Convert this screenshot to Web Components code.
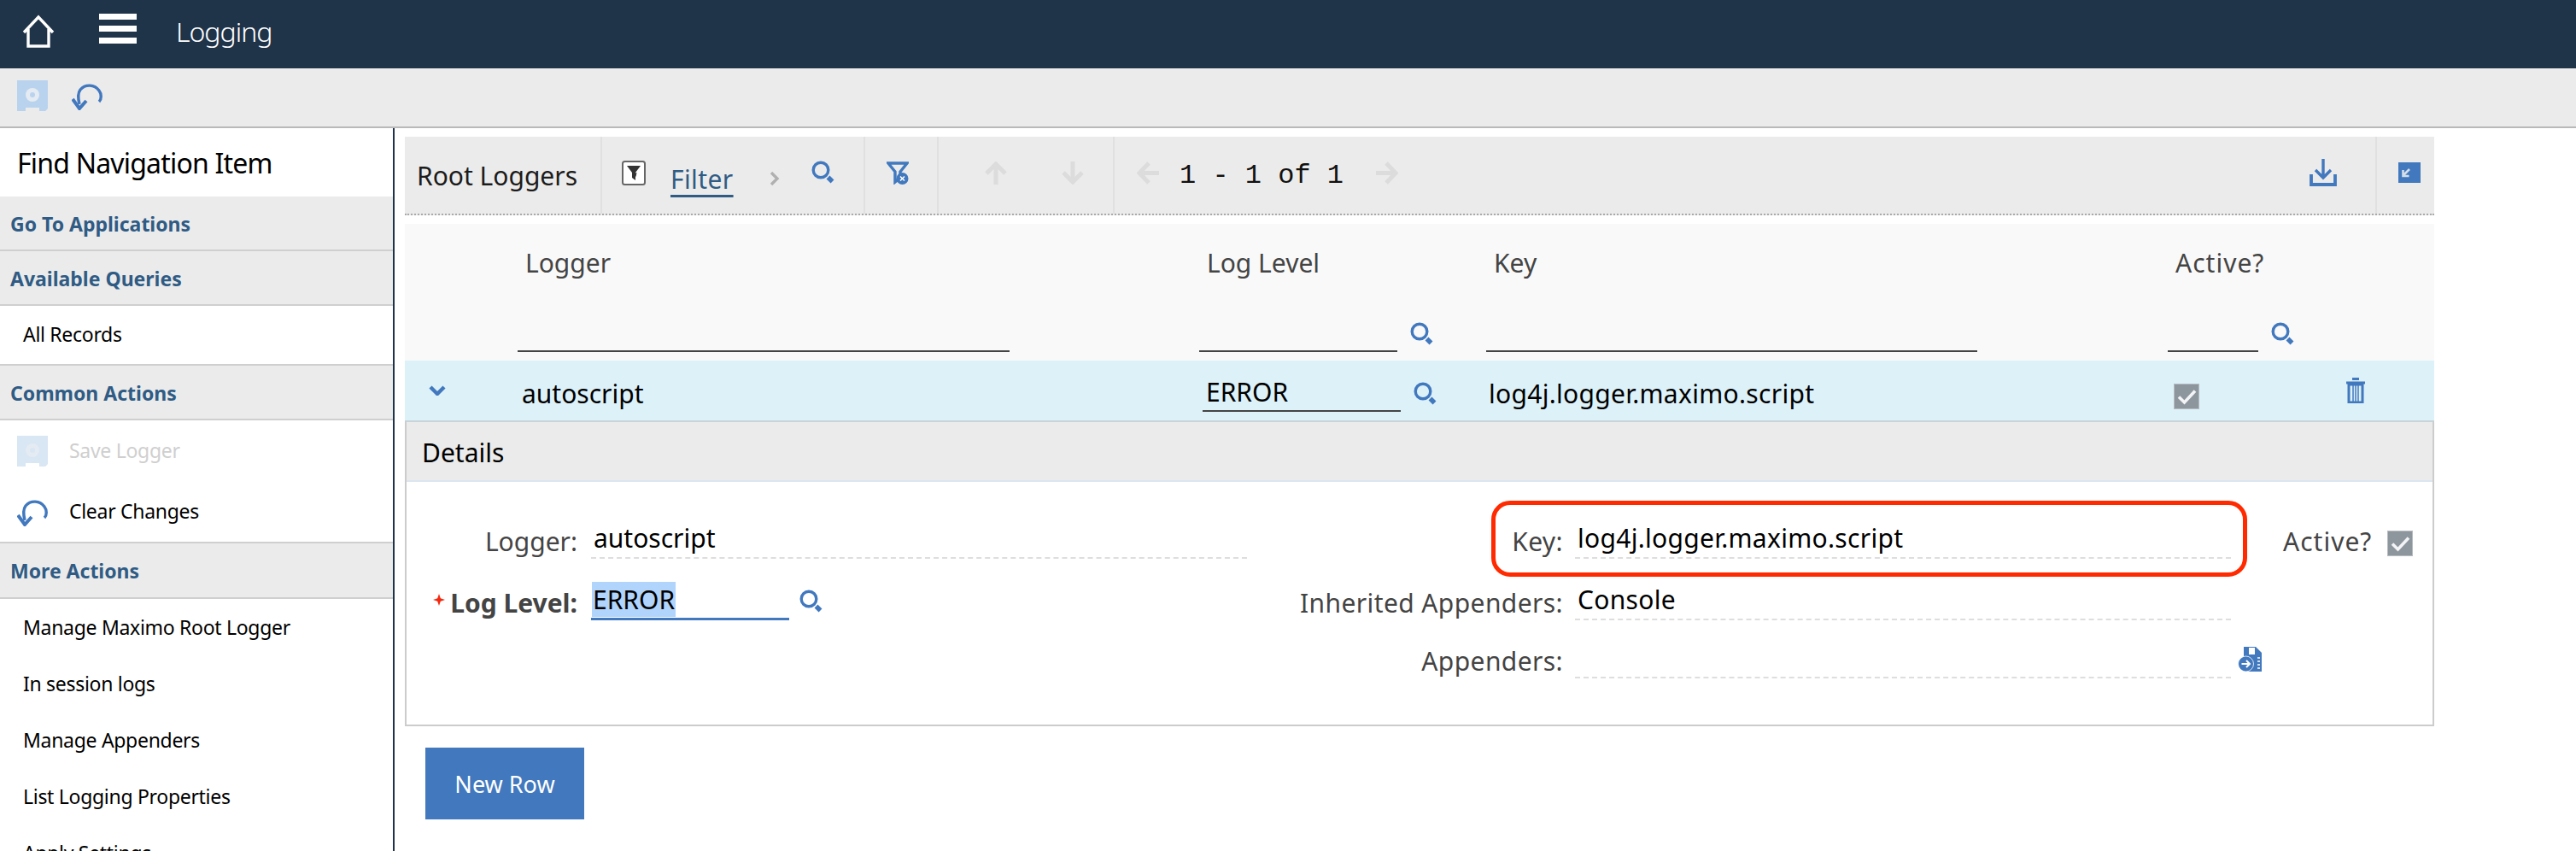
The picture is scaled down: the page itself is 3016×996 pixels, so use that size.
<!DOCTYPE html>
<html lang="en">
<head>
<meta charset="utf-8">
<title>Logging</title>
<style>
  html, body { margin: 0; padding: 0; background: #fff; }
  body { width: 3016px; height: 996px; overflow: hidden; font-family: "Noto Sans", "Open Sans", sans-serif; }
</style>
</head>
<body>
<mx-app>
  <mx-topbar slot="top" title-text="Logging"></mx-topbar>
  <mx-actionbar slot="actions"></mx-actionbar>
  <mx-sidebar slot="side">
    <mx-side-search>Find Navigation Item</mx-side-search>
    <mx-side-head>Go To Applications</mx-side-head>
    <mx-side-head>Available Queries</mx-side-head>
    <mx-side-group h="68">
      <mx-side-item>All Records</mx-side-item>
    </mx-side-group>
    <mx-side-head>Common Actions</mx-side-head>
    <mx-side-group h="142" class="actions">
      <mx-side-item icon="save" disabled>Save Logger</mx-side-item>
      <mx-side-item icon="undo">Clear Changes</mx-side-item>
    </mx-side-group>
    <mx-side-head h="63">More Actions</mx-side-head>
    <mx-side-group h="340" flat>
      <mx-side-item>Manage Maximo Root Logger</mx-side-item>
      <mx-side-item>In session logs</mx-side-item>
      <mx-side-item>Manage Appenders</mx-side-item>
      <mx-side-item>List Logging Properties</mx-side-item>
      <mx-side-item>Apply Settings</mx-side-item>
    </mx-side-group>
  </mx-sidebar>
  <mx-main slot="main">
    <mx-table-bar title-text="Root Loggers"></mx-table-bar>
    <mx-table-head></mx-table-head>
    <mx-table-row></mx-table-row>
    <mx-details></mx-details>
    <mx-button>New Row</mx-button>
  </mx-main>
</mx-app>

<script>
const BLUE = '#4178be';

const ICONS = {
  home: [38, 40, `<path d="M2 21 19 3l17 18M7 17v20h24V17" fill="none" stroke="#fff" stroke-width="3.4"/>`],
  menu: [44, 36, `<path d="M0 0h44v7H0zM0 14h44v7H0zM0 28h44v7H0z" fill="#fff"/>`],
  save: [36, 36, `<path d="M0 0h36v33l-3 3h-7v-4H10v4H0z" fill="currentColor"/><circle cx="18" cy="17" r="8" fill="#e4ebf2"/><circle cx="18" cy="17" r="3" fill="currentColor"/>`],
  undo: [36, 34, `<path d="M32 24c3-3 3-9 0-13a14 14 0 0 0-22-1c-3 4-3 9-1 17" fill="none" stroke="${BLUE}" stroke-width="3.4"/><path d="M1 21l8 11 8-9" fill="none" stroke="${BLUE}" stroke-width="4"/>`],
  filter: [28, 29, `<rect x="1" y="1" width="26" height="27" rx="2.5" fill="#fff" stroke="#666" stroke-width="2"/><path d="M6 6h16l-6 8v9l-4-3v-6z" fill="#333"/><path d="M14.500 15l3-1-1 5z" fill="#333"/>`],
  search: [28, 28, `<circle cx="11" cy="11" r="8.8" fill="none" stroke="${BLUE}" stroke-width="3.4"/><path d="M19.500 19.500l5 5" stroke="${BLUE}" stroke-width="5.500"/>`],
  clearfilter: [26, 27, `<path d="M2 2h22l-8 10v7l-6 5V12z" fill="none" stroke="${BLUE}" stroke-width="3.400"/><circle cx="18.500" cy="20" r="7" fill="${BLUE}"/><path d="M16 17.500l5 5m0-5l-5 5" stroke="#fff" stroke-width="1.600"/>`],
  chevright: [12, 16, `<path d="M2 1l7 7-7 7" fill="none" stroke="#b0b0b0" stroke-width="3.400"/>`],
  up: [26, 27, `<path d="M13 27V4M2 14 13 3l11 11" fill="none" stroke="#dcdcdc" stroke-width="5"/>`],
  down: [26, 27, `<path d="M13 0v23M2 13l11 11 11-11" fill="none" stroke="#dcdcdc" stroke-width="5"/>`],
  left: [26, 27, `<path d="M26 13.500H4M14 2 3 13.500 14 25" fill="none" stroke="#dcdcdc" stroke-width="5"/>`],
  right: [26, 27, `<path d="M0 13.500h22M12 2l11 11.500L12 25" fill="none" stroke="#dcdcdc" stroke-width="5"/>`],
  download: [32, 32, `<path d="M16 0v21M7 13l9 9 9-9" fill="none" stroke="${BLUE}" stroke-width="3.400"/><path d="M2 18v12h28V18" fill="none" stroke="${BLUE}" stroke-width="3.800"/>`],
  minimize: [26, 24, `<rect width="26" height="24" fill="${BLUE}"/><path d="M13 8l-7 7m-.500-6v7h7" fill="none" stroke="#d4deea" stroke-width="2.600"/>`],
  chevdown: [20, 12, `<path d="M2 2l8 8 8-8" fill="none" stroke="${BLUE}" stroke-width="4.400"/>`],
  trash: [22, 30, `<path d="M7 1.500h8M0 6h22" stroke="${BLUE}" stroke-width="3"/><path d="M3 8h16v21H3z" fill="none" stroke="${BLUE}" stroke-width="3"/><path d="M8 8v20M11 8v20M14 8v20" stroke="${BLUE}" stroke-width="1.500"/>`],
  check: [30, 30, `<rect width="30" height="30" fill="#8d959d"/><rect x=".5" y=".5" width="29" height="29" fill="none" stroke="#b5bbc0"/><path d="M6 15.500l6.500 6.500L25 8.500" fill="none" stroke="#f2f4f5" stroke-width="3.600"/>`],
  star: [14, 14, `<path d="M7 0l1.800 5.200L14 7 8.800 8.800 7 14 5.200 8.800 0 7l5.200-1.800z" fill="#f5280f"/>`],
  appender: [28, 30, `<path d="M7 0h14l7 7v22H7z" fill="${BLUE}"/><path d="M13 1h7v8h-7z" fill="#fff"/><path d="M23 13h3M23 17h3M23 21h3M23 25h3" stroke="#fff" stroke-width="1.500"/><circle cx="9.500" cy="20" r="9" fill="${BLUE}" stroke="#fff" stroke-width=".800"/><path d="M4.500 20h9M10 16l4 4-4 4" fill="none" stroke="#fff" stroke-width="2"/>`],
};

// small base class, everything below just hands over its css + markup
class MxElement extends HTMLElement {
  constructor() {
    super();
    this.attachShadow({ mode: 'open' });
  }
  connectedCallback() {
    this.shadowRoot.innerHTML = `<style>${this.css()}</style>${this.html()}`;
  }
  css() { return ':host { display: block; }'; }
  html() { return '<slot></slot>'; }
}

class MxIcon extends MxElement {
  css() {
    return `:host { display: inline-flex; flex: none; color: var(--icon-colour, #b9d3ee); }
      svg { display: block; }`;
  }
  html() {
    const name = this.getAttribute('name');
    const [w, h, body] = ICONS[name];
    return `<svg width="${w}" height="${h}" viewBox="0 0 ${w} ${h}" aria-hidden="true">${body}</svg>`;
  }
}

class MxApp extends MxElement {
  css() {
    return `:host { display: grid; grid-template-rows: 80px 70px 846px; width: 3016px; height: 996px; overflow: hidden; }
      .body { display: flex; min-height: 0; overflow: hidden; }`;
  }
  html() {
    return `<slot name="top"></slot><slot name="actions"></slot>
      <div class="body"><slot name="side"></slot><slot name="main"></slot></div>`;
  }
}

class MxTopbar extends MxElement {
  css() {
    return `:host { display: flex; align-items: center; background: #1f3349; color: #fff; padding-left: 26px; font-size: 32px; font-weight: 300; letter-spacing: -1px; }
      mx-icon[name=home] { margin-top: -6px; }
      mx-icon[name=menu] { margin: -12px 0 0 52px; }
      span { margin: -8px 0 0 46px; }`;
  }
  html() {
    return `<mx-icon name="home"></mx-icon><mx-icon name="menu"></mx-icon><span>${this.getAttribute('title-text')}</span>`;
  }
}

class MxActionbar extends MxElement {
  css() {
    return `:host { display: flex; align-items: center; gap: 28px; background: #ebebeb; border-bottom: 2px solid #b9b9b9; box-sizing: border-box; padding: 0 0 4px 20px; }`;
  }
  html() {
    return `<mx-icon name="save"></mx-icon><mx-icon name="undo"></mx-icon>`;
  }
}

class MxSidebar extends MxElement {
  css() {
    return `:host { display: block; flex: none; width: 460px; border-right: 2px solid #1f3349; overflow: hidden; }`;
  }
}

class MxSideSearch extends MxElement {
  css() {
    return `:host { display: flex; align-items: center; height: 80px; padding-left: 20px; font-size: 32px; letter-spacing: -.8px; color: #000; }`;
  }
}

class MxSideHead extends MxElement {
  css() {
    const h = this.getAttribute('h') || 62;
    return `:host { display: flex; align-items: center; height: ${h - 1}px; padding: 1px 0 0 12px; background: #ebebeb; border-bottom: 2px solid #cfcfcf; color: #2f5b84; font-size: 23px; font-weight: 700; }`;
  }
}

class MxSideGroup extends MxElement {
  css() {
    const h = this.getAttribute('h');
    const line = this.hasAttribute('flat') ? '' : 'border-bottom: 2px solid #cfcfcf;';
    return `:host { display: flex; flex-direction: column; height: ${h}px; ${line} }`;
  }
}

class MxSideItem extends MxElement {
  css() {
    const icon = this.hasAttribute('icon');
    return `:host { display: flex; align-items: center; gap: 25px; height: ${icon ? 71 : 66}px; flex: none; padding-left: ${icon ? 20 : 27}px; font-size: 23px; letter-spacing: -.3px; color: ${this.hasAttribute('disabled') ? '#cfcfcf' : '#000'}; --icon-colour: #d9e6f3; }
      span { margin-top: ${icon ? -2 : 0}px; }`;
  }
  html() {
    const icon = this.getAttribute('icon');
    return `${icon ? `<mx-icon name="${icon}"></mx-icon>` : ''}<span><slot></slot></span>`;
  }
}

class MxMain extends MxElement {
  css() {
    return `:host { display: flex; flex-direction: column; align-items: flex-start; flex: 1; padding: 10px 0 0 12px; }`;
  }
}

class MxTableBar extends MxElement {
  css() {
    return `:host { display: flex; width: 2376px; height: 92px; box-sizing: border-box; background: #ebebeb; border-bottom: 2px dotted #a9a9a9; font-size: 30px; }
      .cell { display: flex; align-items: center; border-right: 2px solid #e0e0e0; box-sizing: border-box; height: 90px; }
      .title { width: 231px; padding: 0 0 0 14px; color: #1c1c1c; }
      .filter { width: 308px; padding-left: 23px; }
      .filter a { margin-left: 29px; color: #2f5b84; letter-spacing: .4px; text-decoration: underline; text-underline-offset: 7px; position: relative; top: 4px; }
      .filter mx-icon { margin-top: -4px; }
      .filter mx-icon[name=chevright] { margin: 8px 0 0 42px; }
      .filter mx-icon[name=search] { margin-left: 37px; }
      .clear { width: 86px; padding-left: 25px; }
      .arrows { width: 206px; padding-left: 54px; gap: 64px; }
      .pager { flex: 1; padding-left: 26px; border: 0; }
      .pager span { margin: 0 38px 0 24px; font: 32px "Liberation Mono", monospace; white-space: pre; color: #111; }
      .save { width: auto; padding-right: 45px; }
      .min { width: 67px; padding-left: 25px; border: 0; }
      .cell > mx-icon { margin-top: -6px; }`;
  }
  html() {
    return `<div class="cell title">${this.getAttribute('title-text')}</div>
      <div class="cell filter">
        <mx-icon name="filter"></mx-icon><a>Filter</a>
        <mx-icon name="chevright"></mx-icon><mx-icon name="search"></mx-icon>
      </div>
      <div class="cell clear"><mx-icon name="clearfilter"></mx-icon></div>
      <div class="cell arrows"><mx-icon name="up"></mx-icon><mx-icon name="down"></mx-icon></div>
      <div class="cell pager"><mx-icon name="left"></mx-icon><span>1 - 1 of 1</span><mx-icon name="right"></mx-icon></div>
      <div class="cell save"><mx-icon name="download"></mx-icon></div>
      <div class="cell min"><mx-icon name="minimize"></mx-icon></div>`;
  }
}

const TABLE_COLS = 'grid-template-columns: 132px 798px 336px 798px 312px;';

class MxTableHead extends MxElement {
  css() {
    return `:host { display: grid; ${TABLE_COLS} grid-template-rows: 1fr; width: 2376px; height: 160px; margin-top: 10px; background: #f9f9f9; color: #444; font-size: 30px; }
      .col { display: flex; flex-direction: column; position: relative; }
      .lab { margin: 25px 0 0 9px; line-height: 42px; }
      .lab.wide { letter-spacing: 1px; }
      .filter { display: flex; align-items: flex-end; gap: 15px; margin-top: auto; margin-bottom: 10px; height: 28px; }
      .filter i { display: block; height: 2px; background: #444; }
      .filter mx-icon { margin-bottom: 7px; }`;
  }
  html() {
    const col = (name, w) => `<div class="col"><div class="lab ${name === 'Active?' ? 'wide' : ''}">${name}</div>
      <div class="filter"><i style="width:${w}px"></i>${w < 300 ? '<mx-icon name="search"></mx-icon>' : ''}</div></div>`;
    return `<div></div>${col('Logger', 576)}${col('Log Level', 232)}${col('Key', 575)}${col('Active?', 106)}`;
  }
}

class MxTableRow extends MxElement {
  css() {
    return `:host { display: grid; ${TABLE_COLS} width: 2376px; height: 70px; background: #ddf1f9; color: #000; font-size: 30px; }
      .cell { display: flex; align-items: center; }
      .exp { padding-left: 28px; }
      .ind { padding: 7px 0 0 5px; }
      .lvl { gap: 15px; padding-left: 4px; }
      .lvl div { align-self: flex-end; width: 232px; box-sizing: border-box; padding: 2px 0 0 4px; border-bottom: 2px solid #444; line-height: 42px; height: 46px; margin-bottom: 10px; }
      .lvl mx-icon { margin-top: 8px; }
      .key { padding: 7px 0 0 3px; letter-spacing: .3px; }
      .act { padding-left: 7px; }
      .act mx-icon[name=check] { margin-top: 14px; }
      .act mx-icon[name=trash] { margin-left: 172px; }`;
  }
  html() {
    return `<div class="cell exp"><mx-icon name="chevdown"></mx-icon></div>
      <div class="cell ind">autoscript</div>
      <div class="cell lvl"><div>ERROR</div><mx-icon name="search"></mx-icon></div>
      <div class="cell key">log4j.logger.maximo.script</div>
      <div class="cell act"><mx-icon name="check"></mx-icon><mx-icon name="trash"></mx-icon></div>`;
  }
}

class MxField extends MxElement {
  css() {
    const right = this.hasAttribute('right');
    return `:host { display: contents; }
      .label { display: flex; align-items: flex-end; justify-content: flex-end; color: #444; line-height: 42px; margin-bottom: -1px; letter-spacing: ${right ? .4 : 0}px; }
      .required { font-weight: 700; }
      .required mx-icon { align-self: flex-start; margin: 41px 6px 0 0; }
      .value { display: flex; align-items: flex-end; padding-left: ${right ? 14 : 16}px; color: #000; letter-spacing: ${right ? .3 : 0}px; }
      .box { flex: none; width: 768px; box-sizing: border-box; height: 50px; padding: 4px 0 0 3px; line-height: 44px; border-bottom: 2px dashed #dedede; }
      .box.edit { width: 232px; height: 44px; padding: 0 0 0 1px; line-height: 40px; border-bottom: 3px solid ${BLUE}; }
      mark { background: #b0d4fb; color: #000; padding: 0 1px; }
      mx-icon[name=search] { margin: 0 0 8px 12px; }
      mx-icon[name=appender] { margin: 0 0 7px 8px; }`;
  }
  html() {
    const required = this.hasAttribute('required');
    const value = this.getAttribute('value') || '';
    const icon = this.getAttribute('icon');
    return `<div class="label ${required ? 'required' : ''}">${required ? '<mx-icon name="star"></mx-icon>' : ''}${this.getAttribute('label')}</div>
      <div class="value">
        ${required ? `<div class="box edit"><mark>${value}</mark></div>` : `<div class="box">${value}</div>`}
        ${icon ? `<mx-icon name="${icon}"></mx-icon>` : ''}
      </div>`;
  }
}

class MxDetails extends MxElement {
  css() {
    return `:host { display: block; position: relative; width: 2376px; height: 358px; box-sizing: border-box; border: 2px solid #cccccc; border-top-color: #c8d4d8; color: #000; font-size: 30px; }
      .head { height: 70px; box-sizing: border-box; padding: 2px 0 0 18px; background: #ebebeb; border-bottom: 2px solid #dde6ef; line-height: 68px; }
      .grid { display: grid; grid-template-columns: 200px 784px 370px 782px 1fr; grid-template-rows: 90px 72px 68px; }
      .active { display: flex; align-items: flex-end; padding-left: 61px; gap: 18px; color: #444; line-height: 42px; letter-spacing: 1px; margin-bottom: -1px; }
      .active mx-icon { margin-bottom: 4px; }
      .mark { position: absolute; left: 1270px; top: 92px; width: 885px; height: 89px; box-sizing: border-box; border: 5px solid #ff2a00; border-radius: 22px; pointer-events: none; }`;
  }
  html() {
    return `<div class="head">Details</div>
      <div class="grid">
        <mx-field label="Logger:" value="autoscript"></mx-field>
        <mx-field label="Key:" value="log4j.logger.maximo.script" right></mx-field>
        <div class="active">Active?<mx-icon name="check"></mx-icon></div>
        <mx-field label="Log Level:" value="ERROR" required icon="search"></mx-field>
        <mx-field label="Inherited Appenders:" value="Console" right></mx-field>
        <div></div>
        <div></div><div></div>
        <mx-field label="Appenders:" icon="appender" right></mx-field>
      </div>
      <div class="mark"></div>`;
  }
}

class MxButton extends MxElement {
  css() {
    return `:host { display: flex; align-items: center; justify-content: center; width: 186px; height: 84px; margin: 25px 0 0 24px; background: ${BLUE}; color: #fff; font-size: 27px; }`;
  }
}

const defs = {
  'mx-icon': MxIcon, 'mx-app': MxApp, 'mx-topbar': MxTopbar, 'mx-actionbar': MxActionbar,
  'mx-sidebar': MxSidebar, 'mx-side-search': MxSideSearch, 'mx-side-head': MxSideHead,
  'mx-side-group': MxSideGroup, 'mx-side-item': MxSideItem, 'mx-main': MxMain,
  'mx-table-bar': MxTableBar, 'mx-table-head': MxTableHead, 'mx-table-row': MxTableRow,
  'mx-field': MxField, 'mx-details': MxDetails, 'mx-button': MxButton,
};
Object.entries(defs).forEach(([tag, cls]) => customElements.define(tag, cls));
</script>
</body>
</html>
